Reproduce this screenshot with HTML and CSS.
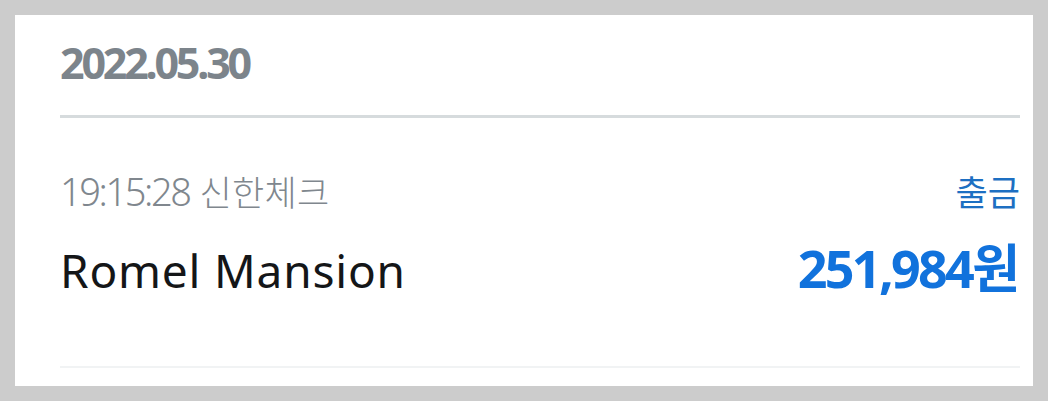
FILE: index.html
```html
<!DOCTYPE html>
<html lang="ko">
<head>
<meta charset="utf-8">
<title>거래내역</title>
<link rel="stylesheet" href="styles.css">
</head>
<body>
<div class="card">
  <div class="date-header">2022.05.30</div>
  <div class="txn">
    <div class="txn-row">
      <div class="txn-meta"><span class="txn-time">19:15:28</span> <span class="txn-card">신한체크</span></div>
      <div class="txn-type">출금</div>
    </div>
    <div class="txn-row txn-row-main">
      <div class="txn-name">Romel Mansion</div>
      <div class="txn-amount">251,984<span class="txn-unit">원</span></div>
    </div>
  </div>
</div>
</body>
</html>
```

FILE: styles.css
```css
html, body {
  margin: 0;
  padding: 0;
}
body {
  background: #cccccc;
  padding: 15px;
  font-family: "Noto Sans", "Noto Sans CJK KR", sans-serif;
}
.card {
  background: #ffffff;
  height: 371px;
  box-sizing: border-box;
  padding: 0 13px 0 45px;
}
.date-header {
  padding: 26px 0 31px 0;
  font-size: 43px;
  line-height: 43px;
  font-weight: 700;
  color: #7c848b;
  letter-spacing: -3.2px;
  border-bottom: 3px solid #d6dbdd;
}
.txn {
  padding: 54px 0 72px 0;
  border-bottom: 2px solid #f1f3f4;
}
.txn-row {
  display: flex;
  justify-content: space-between;
  align-items: baseline;
}
.txn-row-main {
  margin-top: 30px;
}
.txn-meta {
  font-size: 38px;
  line-height: 38px;
  font-weight: 300;
  color: #80878e;
}
.txn-time {
  letter-spacing: -2.4px;
}
.txn-card {
  font-family: "Noto Sans CJK KR", sans-serif;
  font-size: 35px;
  letter-spacing: 0.3px;
}
.txn-type {
  font-family: "Noto Sans CJK KR", sans-serif;
  font-size: 35px;
  line-height: 35px;
  color: #1d6fc2;
}
.txn-name {
  font-size: 46px;
  line-height: 46px;
  color: #141618;
  letter-spacing: 0.8px;
}
.txn-amount {
  font-size: 52px;
  line-height: 52px;
  font-weight: 700;
  color: #1172dc;
  letter-spacing: -2.7px;
}
.txn-unit {
  font-family: "Noto Sans CJK KR", sans-serif;
  letter-spacing: 0;
}
```
